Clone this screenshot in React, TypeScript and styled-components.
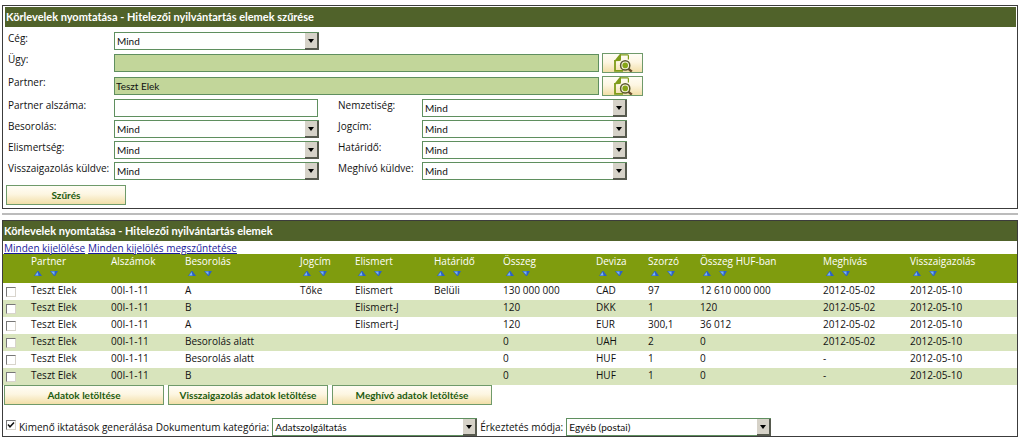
import React from 'react';
import styled, { createGlobalStyle } from 'styled-components';

const GlobalStyle = createGlobalStyle`
  * { box-sizing: border-box; }
  body {
    margin: 5px 6px 0 2px;
    background: #fff;
    color: #111;
    font: 10px/16px "Open Sans", "Noto Sans", sans-serif;
  }
  button, input, select { font: 10px/14px Lato, "Open Sans", sans-serif; color: inherit; }
`;

const Panel = styled.section`
  border: 1px solid #3c3c3c;
`;

const FilterPanel = styled(Panel)`
  padding: 1px 1px 3px 2px;
`;

const Title = styled.h2`
  margin: 0;
  padding: 0 1px;
  height: 20px;
  background: #50622a;
  color: #fff;
  font: bold 11px/20px Lato, "Open Sans", sans-serif;
`;

const FilterForm = styled.form`
  padding-top: 5px;
`;

const Fields = styled.div`
  display: grid;
  grid-template-columns: 106px 224px 84px 205px;
  row-gap: 3px;
  padding-left: 3px;
`;

const Label = styled.label`
  line-height: 13px;
  white-space: nowrap;
`;

const LongCell = styled.div`
  grid-column: 2 / -1;
  display: flex;
  align-items: center;
  gap: 3px;
`;

const TextField = styled.input`
  width: 204px;
  height: 18px;
  padding: 0 1px;
  border: 1px solid #5f8f5f;
  border-radius: 0;
  background: #fff;
  outline: none;
`;

const LookupField = styled(TextField)`
  flex: none;
  width: 485px;
  background: #c2d69a;
`;

const SelectBox = styled.span`
  display: grid;
  width: 205px;
  height: 18px;
`;

const NativeSelect = styled.select`
  grid-area: 1 / 1;
  appearance: none;
  width: 100%;
  height: 18px;
  padding: 0 16px 0 2px;
  border: 1px solid #5f8f5f;
  border-radius: 0;
  background: #fff;
  outline: none;
`;

const SelectArrow = styled.span`
  grid-area: 1 / 1;
  justify-self: end;
  display: grid;
  place-items: center;
  width: 14px;
  height: 17px;
  margin-top: 1px;
  border-style: solid;
  border-width: 0 2px 2px 0;
  border-color: #56594e;
  background: #d6d2c8;
  pointer-events: none;
`;

const Button = styled.button<{ $width: number }>`
  flex: none;
  width: ${(p) => p.$width}px;
  height: 20px;
  padding: 0;
  border: 1px solid #6f9a6a;
  border-radius: 0;
  background: linear-gradient(#fffdf5 0%, #fdf6e2 45%, #f2dfa8 100%);
  color: #1d5c10;
  font-weight: bold;
`;

const IconButton = styled(Button)`
  display: grid;
  place-items: center;
`;

const SubmitRow = styled.div`
  padding: 5px 0 0 1px;
`;

const Divider = styled.hr`
  margin: 4px 0 5px;
  border: 0;
  border-top: 2px solid #bcbcbc;
`;

const Links = styled.div`
  display: flex;
  gap: 3px;
  height: 13px;
  padding-left: 1px;
  line-height: 14px;
`;

const Link = styled.a`
  color: #1a1a9c;
  text-decoration: underline;
`;

const Table = styled.table`
  width: 100%;
  table-layout: fixed;
  border-collapse: collapse;
`;

const HeadCell = styled.th`
  height: 29px;
  padding: 0;
  background: #7f9c0e;
  color: #fff;
  font-weight: normal;
  line-height: 14px;
  text-align: left;
  vertical-align: top;
  white-space: nowrap;
`;

const Sorters = styled.span`
  display: flex;
  gap: 8px;
  padding: 3px 0 0 3px;
`;

const SortButton = styled.button`
  display: block;
  width: 8px;
  height: 5px;
  padding: 0;
  border: 0;
  background: none;
  line-height: 0;
`;

const Row = styled.tr`
  height: 17px;
  &:nth-child(even) { background: #d8e4bc; }
`;

const Cell = styled.td`
  height: 17px;
  padding: 0 0 2px;
  line-height: 15px;
  white-space: nowrap;
`;

const Check = styled.input`
  appearance: none;
  display: block;
  width: 10px;
  height: 10px;
  margin: 3px 0 0 3px;
  border: 1px solid #777;
  border-right-color: #d8d4cc;
  border-bottom-color: #d8d4cc;
  background: #fff;
  &:checked {
    background: #fff url("data:image/svg+xml,%3Csvg xmlns='http://www.w3.org/2000/svg' viewBox='0 0 8 8'%3E%3Cpath d='M1 3.5 3 5.8 7 1.6' fill='none' stroke='%23111' stroke-width='1.5'/%3E%3C/svg%3E") center / 8px 8px;
  }
`;

const Actions = styled.div`
  display: flex;
  gap: 4px;
  padding-left: 1px;
`;

const Options = styled.div`
  display: flex;
  align-items: center;
  gap: 3px;
  padding-top: 13px;
`;

const OptionCheck = styled(Check)`
  margin-top: 0;
  margin-bottom: 4px;
`;

const SortUp = () => (
  <svg width="8" height="5" viewBox="0 0 8 5" aria-hidden="true">
    <path d="M0 5 3.5 0H4.5L8 5Z" fill="#2d62c4" />
    <path d="M1 4.5 3.6 1 4.5 4.5Z" fill="#7db4f2" />
  </svg>
);

const SortDown = () => (
  <svg width="8" height="5" viewBox="0 0 8 5" aria-hidden="true">
    <path d="M0 0H8L5 5H4Z" fill="#2d62c4" />
    <path d="M1 .5H4.6L4.4 4Z" fill="#7db4f2" />
  </svg>
);

const LookupIcon = () => (
  <svg width="20" height="18" viewBox="0 0 20 18" aria-hidden="true">
    <path d="M7 .9H14.6Q15.4 .9 15.4 1.8V5.6" fill="none" stroke="#7f9c1a" strokeWidth="1.2" />
    <path d="M2 6V16.8H10" fill="none" stroke="#7f9c1a" strokeWidth="1.8" />
    <path d="M1.1 7.2 6.6 .3H8V5.4Q8 7 6.4 7Z" fill="#7f9c1a" />
    <path d="M15.2 14.6 18.8 17.6" stroke="#6b4d2a" strokeWidth="2.4" />
    <circle cx="12.2" cy="11.4" r="4.6" fill="#fbf6e0" stroke="#5b5a30" strokeWidth="1.5" />
    <circle cx="12.2" cy="11.4" r="2.8" fill="#86a516" />
  </svg>
);

type SelectProps = { id: string; value?: string };

const Select = ({ id, value = 'Mind' }: SelectProps) => (
  <SelectBox>
    <NativeSelect id={id} defaultValue={value}>
      <option>{value}</option>
    </NativeSelect>
    <SelectArrow>
      <svg width="6" height="4" viewBox="0 0 6 4" aria-hidden="true">
        <path d="M0 0H6L3 4Z" fill="#000" />
      </svg>
    </SelectArrow>
  </SelectBox>
);

const SelectField = ({ id, label }: { id: string; label: string }) => (
  <>
    <Label htmlFor={id}>{label}</Label>
    <Select id={id} />
  </>
);

const LookupRow = ({ id, label, value }: { id: string; label: string; value: string }) => (
  <>
    <Label htmlFor={id}>{label}</Label>
    <LongCell>
      <LookupField id={id} defaultValue={value} />
      <IconButton type="button" $width={41} aria-label={label}>
        <LookupIcon />
      </IconButton>
    </LongCell>
  </>
);

const columns = [
  { name: '', width: 28, sortable: false },
  { name: 'Partner', width: 80, sortable: true },
  { name: 'Alszámok', width: 74, sortable: false },
  { name: 'Besorolás', width: 115, sortable: true },
  { name: 'Jogcím', width: 55, sortable: true },
  { name: 'Elismert', width: 79, sortable: true },
  { name: 'Határidő', width: 69, sortable: true },
  { name: 'Összeg', width: 93, sortable: true },
  { name: 'Deviza', width: 52, sortable: true },
  { name: 'Szorzó', width: 52, sortable: true },
  { name: 'Összeg HUF-ban', width: 123, sortable: true },
  { name: 'Meghívás', width: 87, sortable: true },
  { name: 'Visszaigazolás', width: 107, sortable: true },
];

const rows = [
  ['Teszt Elek', '00I-1-11', 'A', 'Tőke', 'Elismert', 'Belüli', '130 000 000', 'CAD', '97', '12 610 000 000', '2012-05-02', '2012-05-10'],
  ['Teszt Elek', '00I-1-11', 'B', '', 'Elismert-J', '', '120', 'DKK', '1', '120', '2012-05-02', '2012-05-10'],
  ['Teszt Elek', '00I-1-11', 'A', '', 'Elismert-J', '', '120', 'EUR', '300,1', '36 012', '2012-05-02', '2012-05-10'],
  ['Teszt Elek', '00I-1-11', 'Besorolás alatt', '', '', '', '0', 'UAH', '2', '0', '2012-05-02', '2012-05-10'],
  ['Teszt Elek', '00I-1-11', 'Besorolás alatt', '', '', '', '0', 'HUF', '1', '0', '-', '2012-05-10'],
  ['Teszt Elek', '00I-1-11', 'B', '', '', '', '0', 'HUF', '1', '0', '-', '2012-05-10'],
];

export default function App() {
  return (
    <>
      <GlobalStyle />
      <FilterPanel>
        <Title>Körlevelek nyomtatása - Hitelezői nyilvántartás elemek szűrése</Title>
        <FilterForm onSubmit={(e) => e.preventDefault()}>
          <Fields>
            <Label htmlFor="ceg">Cég:</Label>
            <LongCell>
              <Select id="ceg" />
            </LongCell>
            <LookupRow id="ugy" label="Ügy:" value="" />
            <LookupRow id="partner" label="Partner:" value="Teszt Elek" />
            <Label htmlFor="alszam">Partner alszáma:</Label>
            <TextField id="alszam" />
            <SelectField id="nemzetiseg" label="Nemzetiség:" />
            <SelectField id="besorolas" label="Besorolás:" />
            <SelectField id="jogcim" label="Jogcím:" />
            <SelectField id="elismertseg" label="Elismertség:" />
            <SelectField id="hatarido" label="Határidő:" />
            <SelectField id="visszaigazolas" label="Visszaigazolás küldve:" />
            <SelectField id="meghivo" label="Meghívó küldve:" />
          </Fields>
          <SubmitRow>
            <Button type="submit" $width={120}>Szűrés</Button>
          </SubmitRow>
        </FilterForm>
      </FilterPanel>
      <Divider />
      <Panel>
        <Title>Körlevelek nyomtatása - Hitelezői nyilvántartás elemek</Title>
        <Links>
          <Link href="#all">Minden kijelölése</Link>
          <Link href="#none">Minden kijelölés megszűntetése</Link>
        </Links>
        <Table>
          <colgroup>
            {columns.map((c) => (
              <col key={c.name} width={c.width} />
            ))}
          </colgroup>
          <thead>
            <tr>
              {columns.map((c) => (
                <HeadCell key={c.name} scope="col">
                  {c.name}
                  {c.sortable && (
                    <Sorters>
                      <SortButton type="button" aria-label="Növekvő"><SortUp /></SortButton>
                      <SortButton type="button" aria-label="Csökkenő"><SortDown /></SortButton>
                    </Sorters>
                  )}
                </HeadCell>
              ))}
            </tr>
          </thead>
          <tbody>
            {rows.map((row, i) => (
              <Row key={i}>
                <Cell><Check type="checkbox" aria-label={row[0]} /></Cell>
                {row.map((text, j) => (
                  <Cell key={j}>{text}</Cell>
                ))}
              </Row>
            ))}
          </tbody>
        </Table>
        <Actions>
          <Button type="button" $width={160}>Adatok letöltése</Button>
          <Button type="button" $width={160}>Visszaigazolás adatok letöltése</Button>
          <Button type="button" $width={160}>Meghívó adatok letöltése</Button>
        </Actions>
        <Options>
          <OptionCheck id="iktatas" type="checkbox" defaultChecked />
          <Label htmlFor="iktatas">Kimenő iktatások generálása</Label>
          <Label htmlFor="kategoria">Dokumentum kategória:</Label>
          <Select id="kategoria" value="Adatszolgáltatás" />
          <Label htmlFor="erkeztetes">Érkeztetés módja:</Label>
          <Select id="erkeztetes" value="Egyéb (postai)" />
        </Options>
      </Panel>
    </>
  );
}
